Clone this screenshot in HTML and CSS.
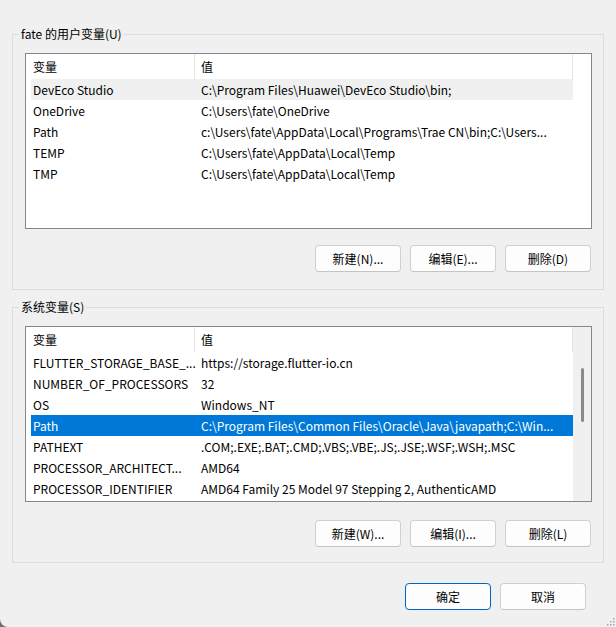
FILE: index.html
```html
<!DOCTYPE html>
<html lang="zh-CN">
<head>
  <meta charset="UTF-8">
  <title>环境变量</title>
  <link rel="stylesheet" href="styles.css">
</head>
<body>

<div class="window">

  <!-- 用户变量 -->
  <fieldset class="group">
    <legend>fate 的用户变量(U)</legend>
    <div class="group-body">
      <div class="list">
        <div class="list-main">
          <div class="list-head">
            <div class="cell">变量</div>
            <div class="cell">值</div>
          </div>
          <div class="row hover"><div class="cell">DevEco Studio</div><div class="cell">C:\Program Files\Huawei\DevEco Studio\bin;</div></div>
          <div class="row"><div class="cell">OneDrive</div><div class="cell">C:\Users\fate\OneDrive</div></div>
          <div class="row"><div class="cell">Path</div><div class="cell">c:\Users\fate\AppData\Local\Programs\Trae CN\bin;C:\Users...</div></div>
          <div class="row"><div class="cell">TEMP</div><div class="cell">C:\Users\fate\AppData\Local\Temp</div></div>
          <div class="row"><div class="cell">TMP</div><div class="cell">C:\Users\fate\AppData\Local\Temp</div></div>
        </div>
        <div class="list-gutter"></div>
      </div>
      <div class="actions">
        <button>新建(N)...</button>
        <button>编辑(E)...</button>
        <button>删除(D)</button>
      </div>
    </div>
  </fieldset>

  <!-- 系统变量 -->
  <fieldset class="group system">
    <legend>系统变量(S)</legend>
    <div class="group-body">
      <div class="list">
        <div class="list-main">
          <div class="list-head">
            <div class="cell">变量</div>
            <div class="cell">值</div>
          </div>
          <div class="row"><div class="cell">FLUTTER_STORAGE_BASE_...</div><div class="cell">https://storage.flutter-io.cn</div></div>
          <div class="row"><div class="cell">NUMBER_OF_PROCESSORS</div><div class="cell">32</div></div>
          <div class="row"><div class="cell">OS</div><div class="cell">Windows_NT</div></div>
          <div class="row selected"><div class="cell">Path</div><div class="cell">C:\Program Files\Common Files\Oracle\Java\javapath;C:\Win...</div></div>
          <div class="row"><div class="cell">PATHEXT</div><div class="cell">.COM;.EXE;.BAT;.CMD;.VBS;.VBE;.JS;.JSE;.WSF;.WSH;.MSC</div></div>
          <div class="row"><div class="cell">PROCESSOR_ARCHITECT...</div><div class="cell">AMD64</div></div>
          <div class="row"><div class="cell">PROCESSOR_IDENTIFIER</div><div class="cell">AMD64 Family 25 Model 97 Stepping 2, AuthenticAMD</div></div>
        </div>
        <div class="scrollbar"><div class="thumb"></div></div>
      </div>
      <div class="actions">
        <button>新建(W)...</button>
        <button>编辑(I)...</button>
        <button>删除(L)</button>
      </div>
    </div>
  </fieldset>

  <div class="footer">
    <button class="primary">确定</button>
    <button>取消</button>
  </div>

  <svg class="grip" width="10" height="10" viewBox="0 0 10 10">
    <rect x="8" y="2" width="1.5" height="1.5" fill="#a6a6a6"/>
    <rect x="5" y="5" width="1.5" height="1.5" fill="#a6a6a6"/>
    <rect x="8" y="5" width="1.5" height="1.5" fill="#a6a6a6"/>
    <rect x="2" y="8" width="1.5" height="1.5" fill="#a6a6a6"/>
    <rect x="5" y="8" width="1.5" height="1.5" fill="#a6a6a6"/>
    <rect x="8" y="8" width="1.5" height="1.5" fill="#a6a6a6"/>
  </svg>
</div>

</body>
</html>
```

FILE: styles.css
```css
* {
  box-sizing: border-box;
}
html {
  background: #6e6e6e;
}
body {
  margin: 0;
  font-family: "Noto Sans CJK SC", "Microsoft YaHei UI", sans-serif;
  font-size: 12px;
  color: #000;
}
.window {
  position: relative;
  width: 616px;
  height: 627px;
  padding-top: 26px;
  background: #f0f0f0;
  border-bottom-left-radius: 8px;
  overflow: hidden;
}
.group {
  margin: 0 12px;
  padding: 0;
  min-width: 0;
  border: 1px solid #dcdcdc;
}
.group + .group {
  margin-top: 9px;
}
.group legend {
  margin-left: 6px;
  padding: 0 2px;
  height: 16px;
  line-height: 16px;
}
.group-body {
  padding: 11px 12px 17px 12px;
}
.system .group-body {
  padding-bottom: 15px;
}
.list {
  display: flex;
  height: 176px;
  margin-right: -1px;
  border: 1px solid #828790;
  background: #fff;
}
.list-main {
  width: 547px;
  padding-left: 5px;
}
.list-gutter {
  flex: 1;
}
.scrollbar {
  flex: 1;
  padding: 41px 0 0 8px;
  background: #f0f0f0;
}
.thumb {
  width: 3px;
  height: 54px;
  border-radius: 2px;
  background: #8a8a8a;
}
.list-head, .row {
  display: grid;
  grid-template-columns: 164px 378px;
}
.list-head {
  height: 25px;
  line-height: 25px;
}
.list-head .cell {
  border-right: 1px solid #e5e5e5;
}
.row {
  height: 21px;
  line-height: 21px;
}
.row.hover {
  background: #f0f0f0;
}
.row.selected {
  background: #0078d7;
  color: #fff;
}
.cell {
  padding-left: 2px;
  white-space: nowrap;
}
.cell + .cell {
  padding-left: 6px;
  overflow: hidden;
}
.actions {
  display: flex;
  justify-content: flex-end;
  gap: 9px;
  margin-top: 16px;
}
.system .actions {
  margin-top: 18px;
}
button {
  width: 86px;
  height: 27px;
  padding: 0;
  font-family: inherit;
  font-size: 12px;
  color: #000;
  background: #fdfdfd;
  border: 1px solid #d0d0d0;
  border-bottom-color: #c4c4c4;
  border-radius: 4px;
}
button.primary {
  border-color: #0067c0;
}
.footer {
  display: flex;
  justify-content: flex-end;
  gap: 9px;
  padding: 20px 30px 0 0;
}
.grip {
  position: absolute;
  right: 1px;
  bottom: 1px;
}
```
